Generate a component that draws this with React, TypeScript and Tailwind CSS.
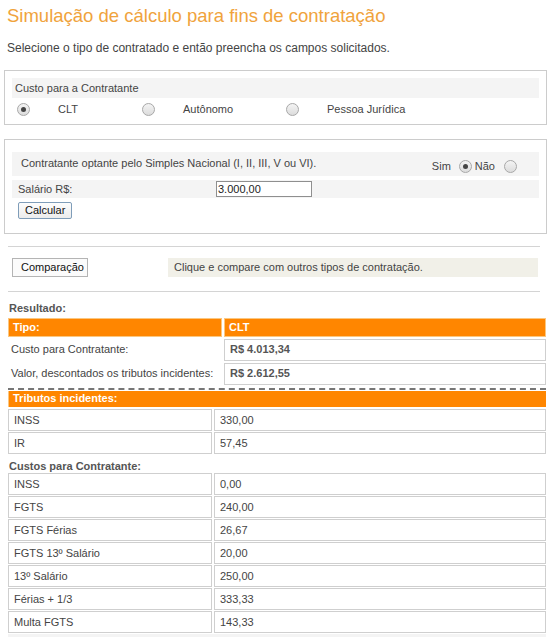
import React from 'react';

const Radio = ({ checked = false }: { checked?: boolean }) => (
  <span className="inline-flex h-[13px] w-[13px] shrink-0 items-center justify-center rounded-full border border-[#a8a8a8] bg-gradient-to-b from-[#f4f4f4] to-[#dcdcdc]">
    {checked && <span className="h-[5px] w-[5px] rounded-full bg-[#444]" />}
  </span>
);

const tributos = [
  ['INSS', '330,00'],
  ['IR', '57,45'],
];

const custos = [
  ['INSS', '0,00'],
  ['FGTS', '240,00'],
  ['FGTS Férias', '26,67'],
  ['FGTS 13º Salário', '20,00'],
  ['13º Salário', '250,00'],
  ['Férias + 1/3', '333,33'],
  ['Multa FGTS', '143,33'],
];

const ValueTable = ({ rows, className = '' }: { rows: string[][]; className?: string }) => (
  <table className={`ml-[6px] w-[542px] border-separate border-spacing-x-[2px] border-spacing-y-[1.8px] ${className}`}>
    <tbody>
      {rows.map(([label, value], i) => (
        <tr key={i}>
          <td className="h-[22px] w-[204px] border border-[#cfcfcf] pl-[5px] leading-[20px]">{label}</td>
          <td className="h-[22px] border border-[#cfcfcf] pl-[5px] leading-[20px]">{value}</td>
        </tr>
      ))}
    </tbody>
  </table>
);

export default function App() {
  return (
    <div className="w-[551px] bg-white pb-[6px] font-['Liberation_Sans',Arial,sans-serif] text-[11px] text-[#444]">
      <h1 className="pl-[7px] pt-[3px] text-[18.5px] leading-[26px] text-[#f0a33c]">
        Simulação de cálculo para fins de contratação
      </h1>
      <p className="mt-[11px] pl-[7px] text-[12px] leading-[16px] text-[#444]">
        Selecione o tipo de contratado e então preencha os campos solicitados.
      </p>

      <div className="mx-[4px] mt-[14px] h-[55px] border border-[#cccccc] px-[7px] pt-[7px]">
        <div className="flex h-[20px] items-center bg-[#f4f4f4] pl-[3px]">Custo para a Contratante</div>
        <div className="flex h-[22px] items-center pl-[5px]">
          <Radio checked />
          <span className="ml-[28px] w-[84px]">CLT</span>
          <Radio />
          <span className="ml-[28px] w-[103px]">Autônomo</span>
          <Radio />
          <span className="ml-[28px]">Pessoa Jurídica</span>
        </div>
      </div>

      <div className="mx-[4px] mt-[14px] h-[95px] border border-[#cccccc] px-[7px] pt-[12px]">
        <div className="flex h-[24px] items-center justify-between bg-[#f4f4f4] pl-[9px] pr-[22px]">
          <span className="-mt-[2px]">Contratante optante pelo Simples Nacional (I, II, III, V ou VI).</span>
          <span className="mt-[4px] flex items-center">
            <span className="mr-[8px]">Sim</span>
            <Radio checked />
            <span className="ml-[3px] mr-[9px]">Não</span>
            <Radio />
          </span>
        </div>
        <div className="mt-[4px] flex h-[18px] items-center bg-[#f4f4f4] pl-[6px]">
          <span className="w-[198px]">Salário R$:</span>
          <span className="flex h-[16px] w-[96px] items-center border border-[#8f8f8f] bg-white pl-[1px] text-[#222]">3.000,00</span>
        </div>
        <button className="ml-[6px] mt-[4px] flex h-[17px] items-center rounded-[2px] border border-[#7f9db9] bg-gradient-to-b from-[#fdfdfd] to-[#ececec] px-[6px] text-[#111]">
          Calcular
        </button>
      </div>

      <div className="mx-[8px] mt-[12px] h-[1px] w-[532px] bg-[#d4d4d4]" />
      <div className="ml-[12px] mt-[11px] flex h-[19px] w-[526px] items-stretch">
        <button className="flex w-[76px] items-center border border-[#b4b4b4] bg-[#fbfbfb] pl-[8px] text-[#111]">
          Comparação
        </button>
        <div className="ml-[80px] flex flex-1 items-center bg-[#f1f0e8] pl-[6px]">
          Clique e compare com outros tipos de contratação.
        </div>
      </div>
      <div className="mx-[8px] mt-[14px] h-[1px] w-[532px] bg-[#d4d4d4]" />

      <div className="mt-[9px] pl-[9px] font-bold leading-[15px] text-[#555]">Resultado:</div>
      <table className="ml-[6px] w-[542px] border-separate border-spacing-[2px]">
        <tbody>
          <tr>
            <td className="h-[18px] w-[214px] border border-[#fbc780] bg-[#ff8600] pl-[4px] font-bold text-white">Tipo:</td>
            <td className="h-[18px] border border-[#fbc780] bg-[#ff8600] pl-[4px] font-bold text-white">CLT</td>
          </tr>
          <tr>
            <td className="h-[22px] whitespace-nowrap pl-[3px]">Custo para Contratante:</td>
            <td className="h-[22px] border border-[#cfcfcf] pl-[5px] font-bold text-[#555]">R$ 4.013,34</td>
          </tr>
          <tr>
            <td className="h-[22px] whitespace-nowrap pl-[3px]">Valor, descontados os tributos incidentes:</td>
            <td className="h-[22px] border border-[#cfcfcf] pl-[5px] font-bold text-[#555]">R$ 2.612,55</td>
          </tr>
        </tbody>
      </table>
      <div className="ml-[8px] mt-[1px] w-[538px] border-t-2 border-dashed border-[#777]" />
      <div className="ml-[8px] mt-[1px] flex h-[16px] w-[538px] items-center border-l border-[#fbc780] bg-[#ff8600] pl-[4px] font-bold text-white">
        Tributos incidentes:
      </div>
      <ValueTable rows={tributos} className="mt-[1px]" />
      <div className="mt-[5px] pl-[9px] font-bold leading-[13px] text-[#555]">Custos para Contratante:</div>
      <ValueTable rows={custos} className="-mt-[1px]" />
      <div className="ml-[8px] h-[3px] w-[538px] bg-[#f4f4f4]" />
    </div>
  );
}
